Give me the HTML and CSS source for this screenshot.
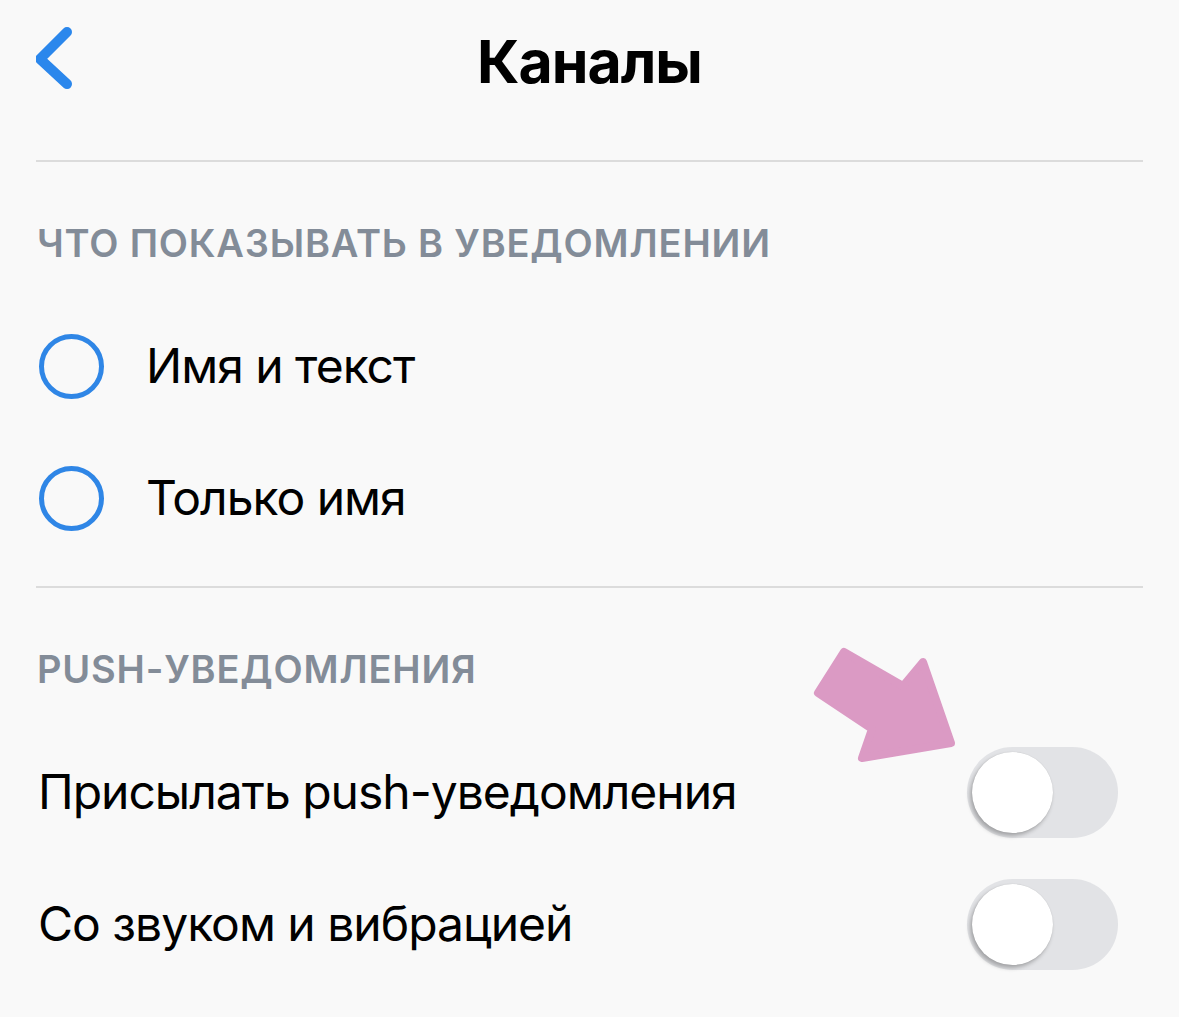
FILE: index.html
```html
<!DOCTYPE html>
<html lang="ru">
<head>
<meta charset="utf-8">
<title>Каналы</title>
<link rel="stylesheet" href="styles.css">
</head>
<body>
<div class="screen">
  <header class="nav">
    <svg class="back" width="40" height="70" viewBox="0 0 40 70"><polyline points="31,5 4,32 31,57" fill="none" stroke="#2b87ec" stroke-width="10" stroke-linecap="round" stroke-linejoin="round"/></svg>
    <h1 class="title">Каналы</h1>
  </header>
  <div class="divider"></div>

  <section class="group">
    <div class="section-title">ЧТО ПОКАЗЫВАТЬ В УВЕДОМЛЕНИИ</div>
    <div class="row">
      <span class="radio"></span>
      <span class="label">Имя и текст</span>
    </div>
    <div class="row">
      <span class="radio"></span>
      <span class="label">Только имя</span>
    </div>
  </section>
  <div class="divider"></div>

  <section class="group">
    <div class="section-title">PUSH-УВЕДОМЛЕНИЯ</div>
    <div class="row row-toggle">
      <span class="label label-plain">Присылать push-уведомления</span>
      <span class="toggle"><span class="knob"></span></span>
      <svg class="arrow" width="150" height="130" viewBox="0 0 150 130"><polygon points="34,13 8,54 62,90 52,119 141,104 113,23 93,47" fill="#db9ac4" stroke="#db9ac4" stroke-width="8" stroke-linejoin="round"/></svg>
    </div>
    <div class="row row-toggle">
      <span class="label label-plain">Со звуком и вибрацией</span>
      <span class="toggle"><span class="knob"></span></span>
    </div>
  </section>
</div>
</body>
</html>
```
FILE: styles.css
```css
html, body {
  margin: 0;
  padding: 0;
  background: #f9f9f9;
}
body {
  font-family: Inter, "Noto Sans", "DejaVu Sans", sans-serif;
  color: #000;
}
.screen {
  width: 1179px;
  height: 1017px;
  padding: 0 36px;
  box-sizing: border-box;
  overflow: hidden;
}
.nav {
  position: relative;
  height: 122px;
  display: flex;
  align-items: center;
  justify-content: center;
  margin-bottom: 38px;
}
.back {
  position: absolute;
  left: 0;
  top: 27px;
}
.title {
  margin: 0;
  font-size: 59px;
  font-weight: 700;
  letter-spacing: -1px;
  line-height: 1;
}
.divider {
  height: 2px;
  background: #dcdcdc;
}
.group {
  padding-bottom: 22px;
}
.section-title {
  padding: 62px 0 38px 1px;
  line-height: 38px;
  font-size: 38px;
  font-weight: 600;
  color: #838c98;
  letter-spacing: 0.8px;
}
.row {
  position: relative;
  height: 132px;
  display: flex;
  align-items: center;
}
.radio {
  width: 55px;
  height: 55px;
  border: 5px solid #2f86e6;
  border-radius: 50%;
  margin-left: 3px;
  margin-right: 42px;
  flex: none;
}
.label {
  font-size: 48px;
  font-weight: 400;
  letter-spacing: -1px;
  line-height: 1;
}
.label-plain {
  margin-left: 2px;
}
.row-toggle {
  justify-content: space-between;
}
.toggle {
  position: relative;
  width: 151px;
  height: 91px;
  border-radius: 46px;
  background: #e2e3e6;
  margin-right: 25px;
  flex: none;
}
.knob {
  position: absolute;
  left: 5px;
  top: 5px;
  width: 81px;
  height: 81px;
  border-radius: 50%;
  background: #fff;
  box-shadow: -2px 3px 4px rgba(0,0,0,0.28), 0 0 1px rgba(0,0,0,0.15);
}
.arrow {
  position: absolute;
  left: 774px;
  top: -87px;
}
```
